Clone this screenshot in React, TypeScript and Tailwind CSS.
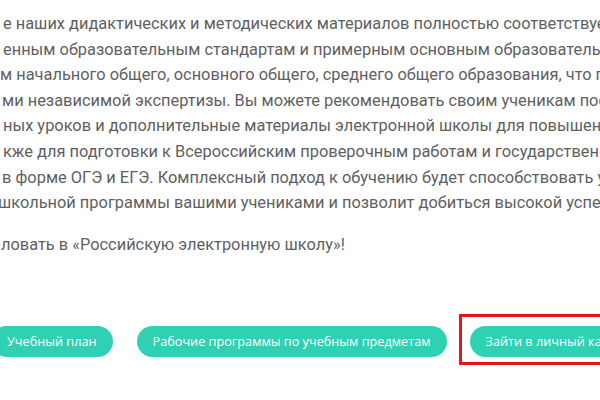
const lines: { text: string; ml: string }[] = [
  { text: 'е наших дидактических и методических материалов полностью соответствует', ml: 'ml-[3px]' },
  { text: 'енным образовательным стандартам и примерным основным образовательным', ml: 'ml-[3px]' },
  { text: 'м начального общего, основного общего, среднего общего образования, что подтверждено', ml: 'ml-[0px]' },
  { text: 'ми независимой экспертизы. Вы можете рекомендовать своим ученикам посещение', ml: 'ml-[2px]' },
  { text: 'ных уроков и дополнительные материалы электронной школы для повышения', ml: 'ml-[3px]' },
  { text: 'кже для подготовки к Всероссийским проверочным работам и государственной', ml: 'ml-[3px]' },
  { text: 'в форме ОГЭ и ЕГЭ. Комплексный подход к обучению будет способствовать успешному', ml: 'ml-[2px]' },
  { text: 'школьной программы вашими учениками и позволит добиться высокой успеваемости.', ml: '-ml-[2px]' },
]

function Pill({ children }: { children: React.ReactNode }) {
  return (
    <button className="h-[31px] shrink-0 whitespace-nowrap rounded-full bg-[#30d0b5] px-4 text-[12.7px] text-white font-['Open_Sans',sans-serif]">
      {children}
    </button>
  )
}

export default function App() {
  return (
    <div className="relative h-[400px] w-[600px] overflow-hidden bg-white">
      <div className="pt-[11px] text-[16.4px] leading-[25.6px] text-[#5f5f5f] font-['Roboto',sans-serif]">
        {lines.map((l, i) => (
          <div key={i} className={`h-[25.6px] whitespace-nowrap ${l.ml}`}>{l.text}</div>
        ))}
        <div className="mt-[16px] ml-[1px] h-[25.6px] whitespace-nowrap">ловать в «Российскую электронную школу»!</div>
      </div>

      <div className="mt-[57px] -ml-[9px] flex items-start whitespace-nowrap">
        <div className="mt-[12px]">
          <Pill>Учебный план</Pill>
        </div>
        <div className="ml-6 mt-[12px]">
          <Pill>Рабочие программы по учебным предметам</Pill>
        </div>
        <div className="ml-[12px] shrink-0 border-[3px] border-[#e8141c] pl-[8px] pr-[20px] pt-[9px] pb-[5px]">
          <Pill>Зайти в личный кабинет</Pill>
        </div>
      </div>
    </div>
  )
}
